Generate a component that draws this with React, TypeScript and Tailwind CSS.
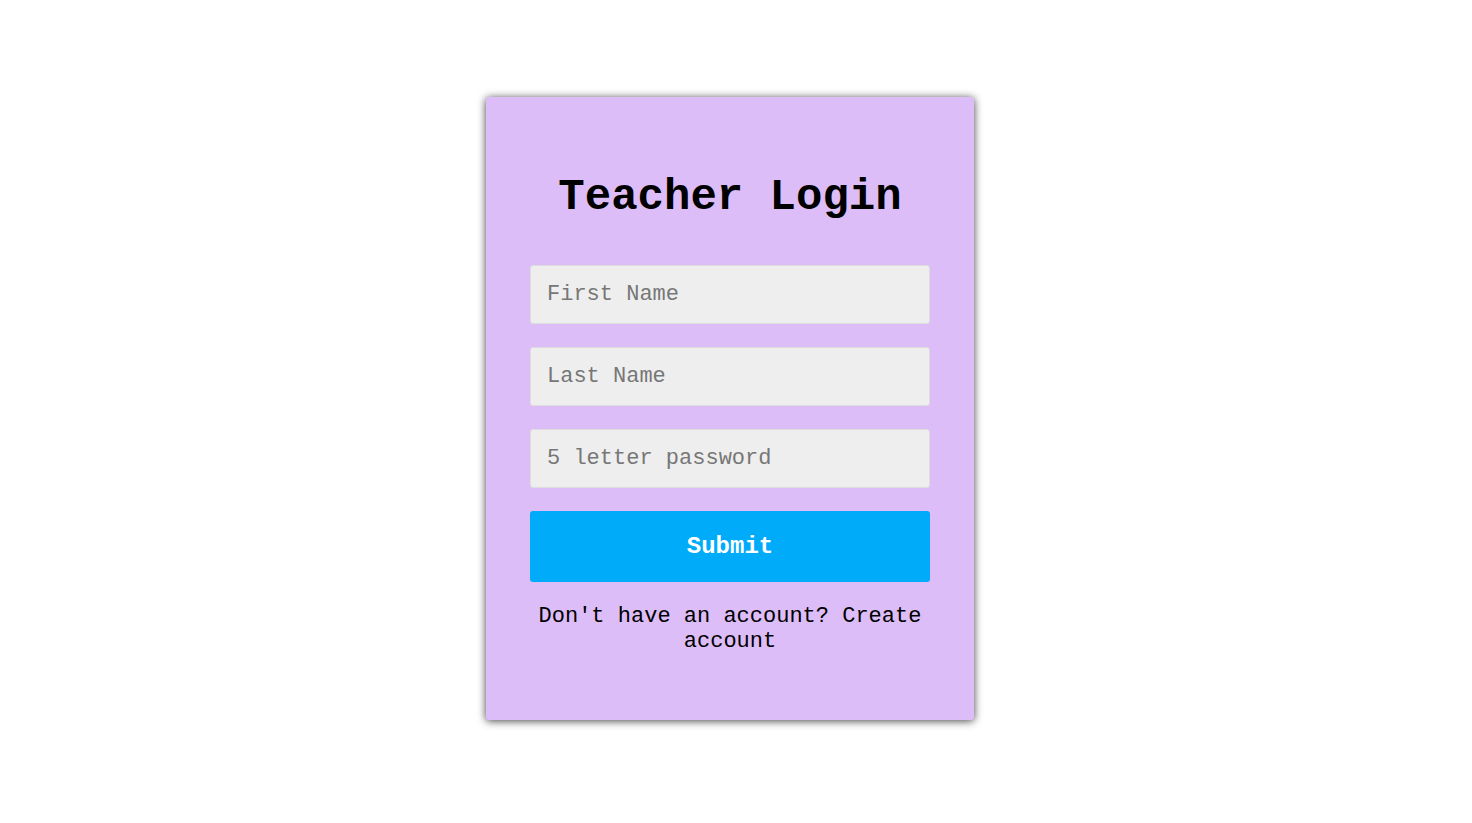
const App = () => {
  return (
    <div className="w-full min-h-[823px] bg-white pr-[12px] pt-[97px] font-['Courier_New','Nimbus_Mono_PS','FreeMono','Liberation_Mono',monospace]">
      <div className="mx-auto w-[488px] h-[623px] bg-[#ddbdf8] rounded-[3px] shadow-[0_1px_8px_rgba(0,0,0,0.75)] px-[44px] pt-[74px] flex flex-col">
        {/* Title */}
        <h1 className="text-center font-bold text-[44px] leading-[52px] text-black">Teacher Login</h1>

        {/* Inputs */}
        <div className="mt-[42px] flex flex-col gap-[23px]">
          <input
            className="w-full h-[59px] bg-[#eeeeee] border border-[#dddddd] rounded-[3px] px-[16px] text-[22px] placeholder:text-[#777777] outline-none"
            placeholder="First Name"
          />
          <input
            className="w-full h-[59px] bg-[#eeeeee] border border-[#dddddd] rounded-[3px] px-[16px] text-[22px] placeholder:text-[#777777] outline-none"
            placeholder="Last Name"
          />
          <input
            className="w-full h-[59px] bg-[#eeeeee] border border-[#dddddd] rounded-[3px] px-[16px] text-[22px] placeholder:text-[#777777] outline-none"
            placeholder="5 letter password"
            type="password"
          />
        </div>

        <button className="mt-[23px] w-full h-[71px] bg-[#00abfa] rounded-[3px] text-white font-bold text-[24px]">
          Submit
        </button>

        <p className="mt-[22px] text-center text-[22px] leading-[25px] text-black">
          Don't have an account? Create account
        </p>
      </div>
    </div>
  );
};

export default App;
